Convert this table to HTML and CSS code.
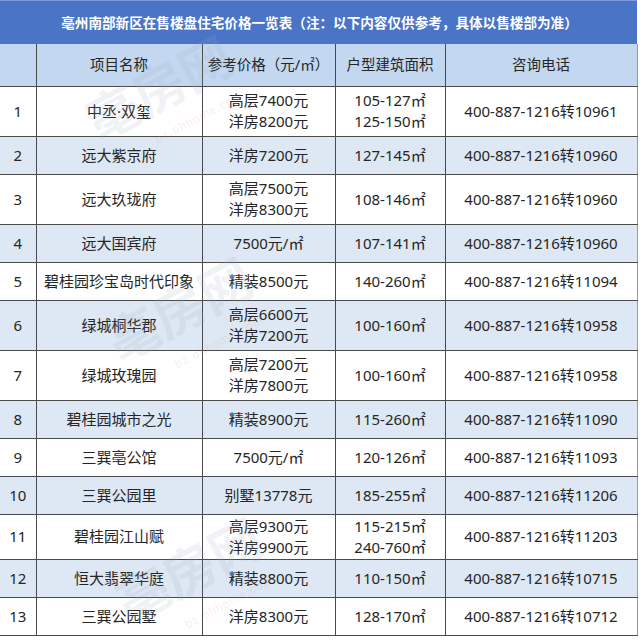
FILE: index.html
```html
<!DOCTYPE html>
<html lang="zh">
<head>
<meta charset="utf-8">
<link rel="stylesheet" href="styles.css">
</head>
<body>
<div class="page">
  <div class="title">亳州南部新区在售楼盘住宅价格一览表（注：以下内容仅供参考，具体以售楼部为准）</div>
  <table class="grid">
    <colgroup>
      <col class="c1"><col class="c2"><col class="c3"><col class="c4"><col class="c5">
    </colgroup>
    <thead>
      <tr class="head"><th></th><th>项目名称</th><th>参考价格（元/㎡）</th><th>户型建筑面积</th><th>咨询电话</th></tr>
    </thead>
    <tbody>
      <tr class="dbl"><td>1</td><td>中丞·双玺</td><td>高层7400元<br>洋房8200元</td><td>105-127㎡<br>125-150㎡</td><td>400-887-1216转10961</td></tr>
      <tr class="sgl alt"><td>2</td><td>远大紫京府</td><td>洋房7200元</td><td>127-145㎡</td><td>400-887-1216转10960</td></tr>
      <tr class="dbl"><td>3</td><td>远大玖珑府</td><td>高层7500元<br>洋房8300元</td><td>108-146㎡</td><td>400-887-1216转10960</td></tr>
      <tr class="sgl alt"><td>4</td><td>远大国宾府</td><td>7500元/㎡</td><td>107-141㎡</td><td>400-887-1216转10960</td></tr>
      <tr class="sgl"><td>5</td><td>碧桂园珍宝岛时代印象</td><td>精装8500元</td><td>140-260㎡</td><td>400-887-1216转11094</td></tr>
      <tr class="dbl alt"><td>6</td><td>绿城桐华郡</td><td>高层6600元<br>洋房7200元</td><td>100-160㎡</td><td>400-887-1216转10958</td></tr>
      <tr class="dbl"><td>7</td><td>绿城玫瑰园</td><td>高层7200元<br>洋房7800元</td><td>100-160㎡</td><td>400-887-1216转10958</td></tr>
      <tr class="sgl alt"><td>8</td><td>碧桂园城市之光</td><td>精装8900元</td><td>115-260㎡</td><td>400-887-1216转11090</td></tr>
      <tr class="sgl"><td>9</td><td>三巽亳公馆</td><td>7500元/㎡</td><td>120-126㎡</td><td>400-887-1216转11093</td></tr>
      <tr class="sgl alt"><td>10</td><td>三巽公园里</td><td>别墅13778元</td><td>185-255㎡</td><td>400-887-1216转11206</td></tr>
      <tr class="mid"><td>11</td><td>碧桂园江山赋</td><td>高层9300元<br>洋房9900元</td><td>115-215㎡<br>240-760㎡</td><td>400-887-1216转11203</td></tr>
      <tr class="sgl alt"><td>12</td><td>恒大翡翠华庭</td><td>精装8800元</td><td>110-150㎡</td><td>400-887-1216转10715</td></tr>
      <tr class="sgl"><td>13</td><td>三巽公园墅</td><td>洋房8300元</td><td>128-170㎡</td><td>400-887-1216转10712</td></tr>
    </tbody>
  </table>
  <div class="wm wm1">亳房网</div>
  <div class="wm wm2">亳房网</div>
  <div class="wm wm3">亳房网</div>
  <div class="wmurl u1">bz.ohhome.com</div>
  <div class="wmurl u2">bz.ohhome.com</div>
  <div class="wmurl u3">bz.ohhome.com</div>
</div>
</body>
</html>
```

FILE: styles.css
```css
* { box-sizing: border-box; }
html, body { margin: 0; padding: 0; background: #fff; }
.page {
  position: relative;
  width: 640px;
  height: 640px;
  overflow: hidden;
  font-family: "Noto Sans CJK SC", "Noto Sans", sans-serif;
  color: #222;
}
.title {
  height: 44px;
  background: #4a74c6;
  border-top: 1px solid #7d9bd6;
  color: #fff;
  font-weight: bold;
  font-size: 13.6px;
  line-height: 42px;
  text-align: center;
  padding-left: 2px;
  width: 637px;
}
.grid {
  border-collapse: collapse;
  width: 637px;
  table-layout: fixed;
  font-family: "Noto Sans", "Noto Sans CJK SC", sans-serif;
  font-size: 15px;
  color: #262626;
}
.c1 { width: 36px; }
.c2 { width: 166px; }
.c3 { width: 133px; }
.c4 { width: 110px; }
.c5 { width: 192px; }
.grid th, .grid td {
  border: 1px solid #4a4a4a;
  text-align: center;
  vertical-align: middle;
  padding: 0;
  line-height: 21px;
  font-weight: normal;
}
.grid th:first-child, .grid td:first-child { border-left: none; }
.grid th:last-child, .grid td:last-child { border-right: 1px solid #9a9a9a; }
.grid thead th { border-top: none; }
.head { height: 42px; background: #c3d8f0; }
.head th { font-size: 14.5px; }
.dbl { height: 50px; }
.mid { height: 45px; }
.sgl { height: 38px; }
.alt { background: #dde8f4; }
.wm {
  position: absolute;
  font-family: "Noto Sans CJK SC", sans-serif;
  font-size: 52px;
  font-weight: bold;
  color: rgba(160, 170, 190, 0.15);
  transform: rotate(-28deg);
  pointer-events: none;
  white-space: nowrap;
}
.wm1 { left: 80px; top: 48px; }
.wm2 { left: 100px; top: 270px; }
.wm3 { left: 110px; top: 530px; }
.wmurl {
  position: absolute;
  font-family: "Liberation Sans", sans-serif;
  font-size: 12px;
  color: rgba(220, 120, 80, 0.14);
  transform: rotate(-28deg);
  white-space: nowrap;
  pointer-events: none;
  letter-spacing: 1px;
}
.u1 { left: 150px; top: 110px; }
.u2 { left: 170px; top: 335px; }
.u3 { left: 180px; top: 595px; }
```
